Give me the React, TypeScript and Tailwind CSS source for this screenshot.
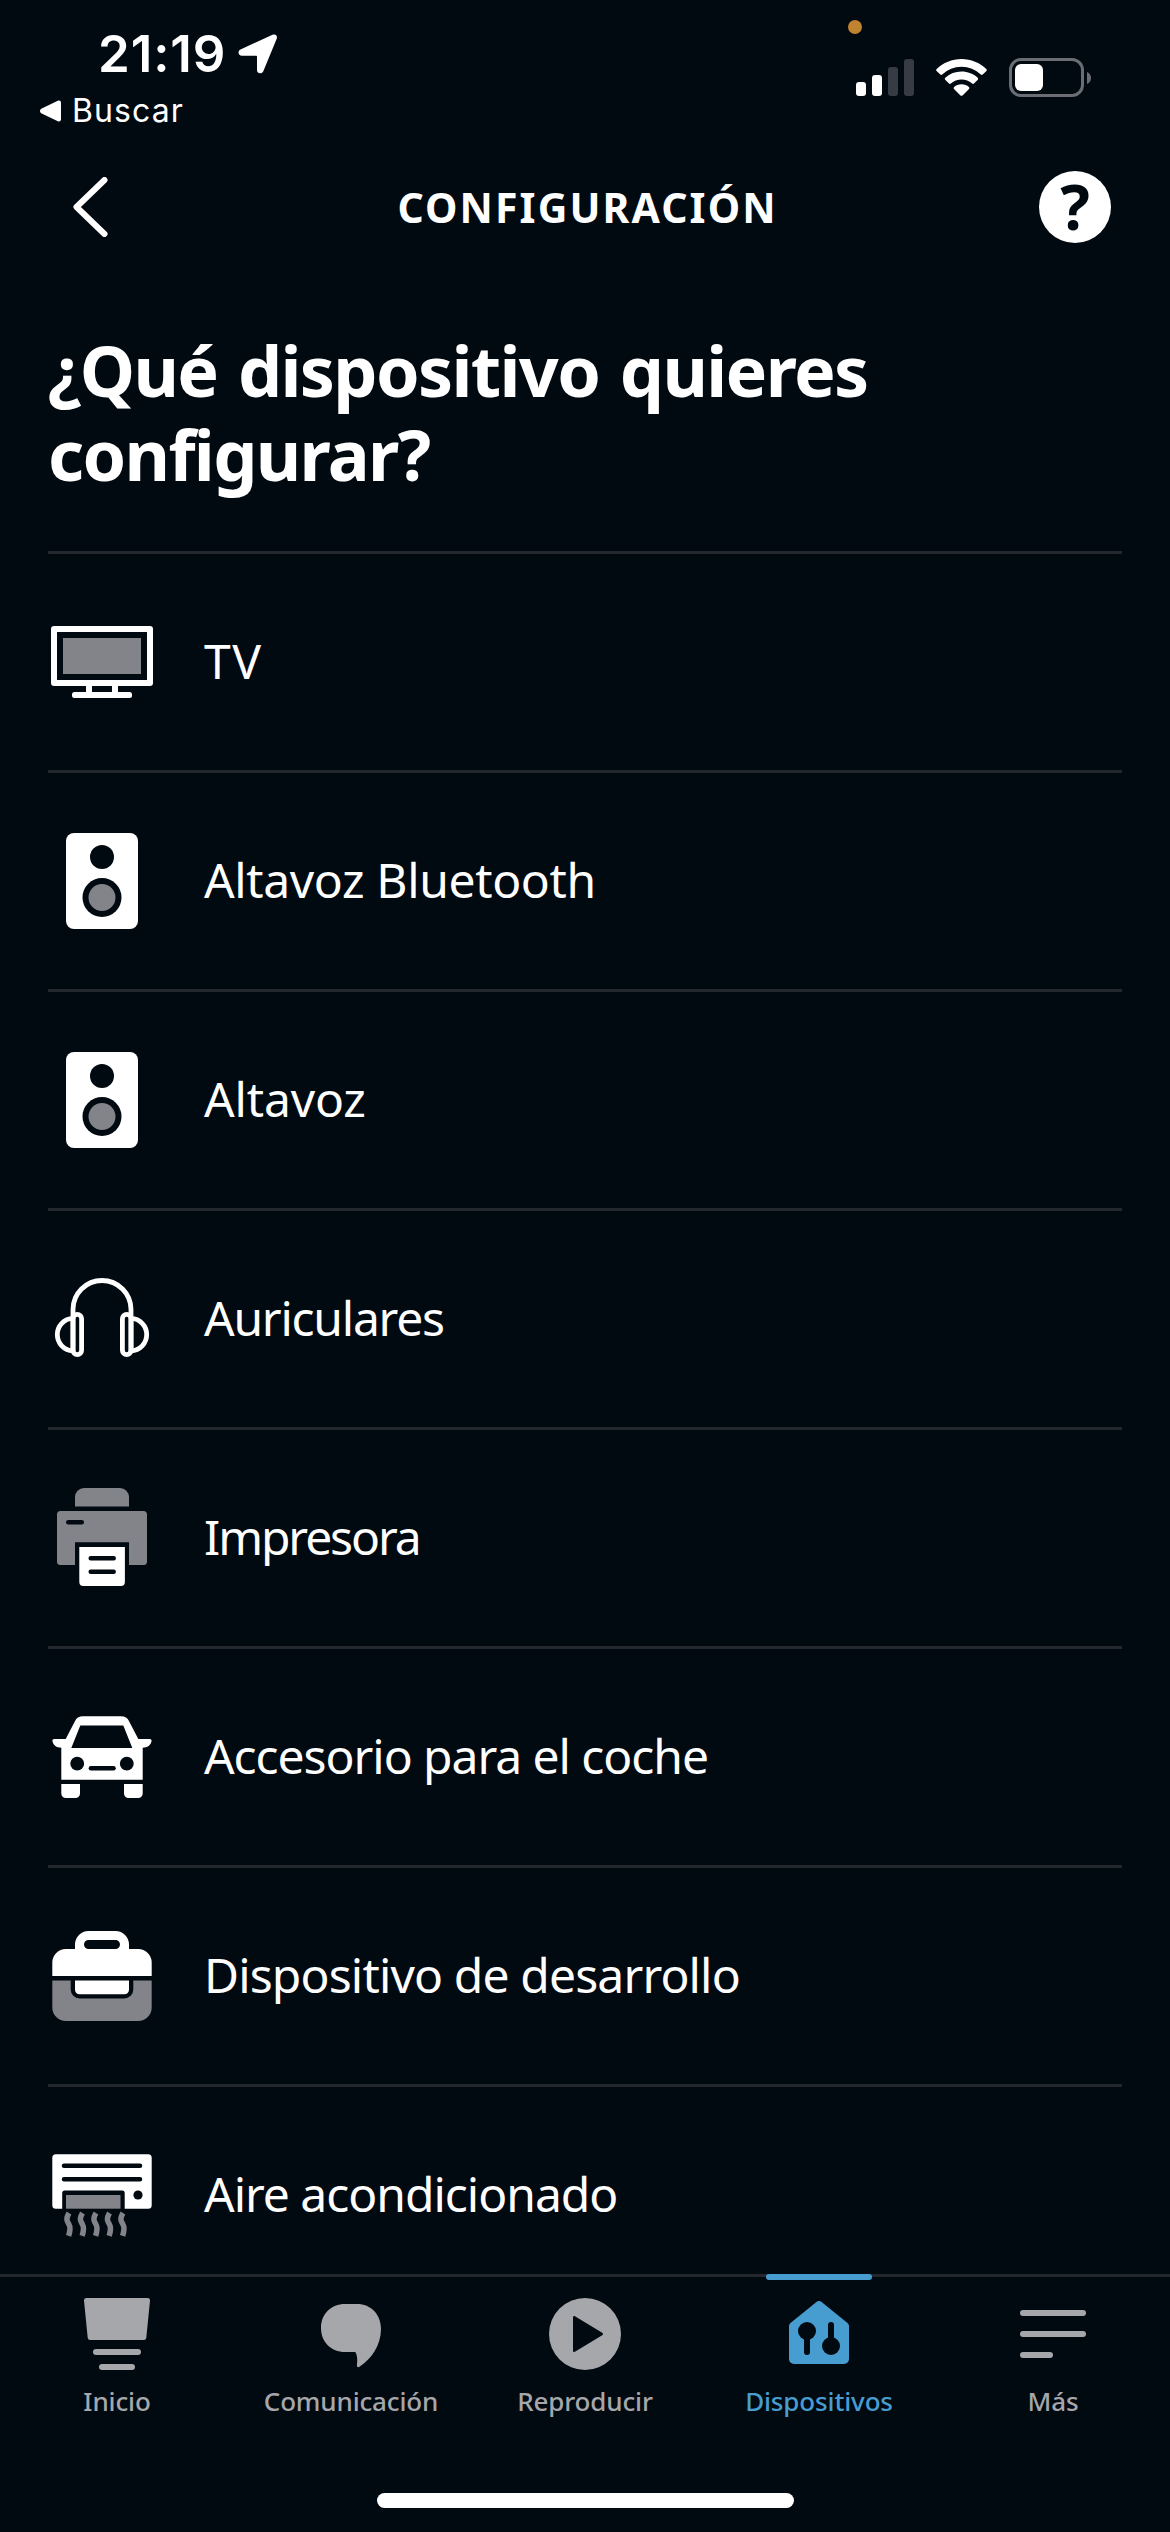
import type { ReactNode } from 'react';

const GREY = '#828489';
const BG = '#010911';

function TvIcon() {
    return (
        <svg className="size-[108px] shrink-0" viewBox="0 0 108 108" fill="none">
            <rect x="6" y="21" width="96" height="54" stroke="#fff" strokeWidth="6" strokeLinejoin="round" />
            <rect x="15" y="30" width="78" height="36" fill={GREY} />
            <path d="M41 77v9M67 77v9" stroke="#fff" strokeWidth="6" />
            <rect x="24" y="84" width="60" height="6" rx="2.5" fill="#fff" />
        </svg>
    );
}

function SpeakerIcon() {
    return (
        <svg className="size-[108px] shrink-0" viewBox="0 0 108 108">
            <rect x="18" y="6" width="72" height="96" rx="8" fill="#fff" />
            <circle cx="54" cy="30" r="12" fill={BG} />
            <circle cx="54" cy="70.5" r="19.5" fill={BG} />
            <circle cx="54" cy="70.5" r="13.5" fill={GREY} />
        </svg>
    );
}

function HeadphonesIcon() {
    return (
        <svg className="size-[108px] shrink-0" viewBox="0 0 108 108" fill="none" stroke="#fff" strokeWidth="4.8">
            <path d="M25 88V44.5a29 29 0 0 1 58 0V88" />
            <rect x="25" y="49.4" width="8.6" height="40.2" rx="4.3" />
            <rect x="74.4" y="49.4" width="8.6" height="40.2" rx="4.3" />
            <path d="M25 53.4C16 53.6 9.3 61 9.3 69.6S16 85.6 25 85.8" />
            <path d="M83 53.4C92 53.6 98.7 61 98.7 69.6S92 85.6 83 85.8" />
        </svg>
    );
}

function PrinterIcon() {
    return (
        <svg className="size-[108px] shrink-0" viewBox="0 0 108 108">
            <path d="M27 22.5V13a9 9 0 0 1 9-9h36a9 9 0 0 1 9 9v9.5z" fill={GREY} />
            <path d="M12.5 27h83a3.5 3.5 0 0 1 3.5 3.5v47a3.5 3.5 0 0 1-3.5 3.5H81V58.3H27V81H12.5A3.5 3.5 0 0 1 9 77.5v-47A3.5 3.5 0 0 1 12.5 27z" fill={GREY} />
            <rect x="18" y="36" width="18" height="4.5" rx="2.25" fill={BG} />
            <path d="M31.3 63h45.6v35a4 4 0 0 1-4 4H35.3a4 4 0 0 1-4-4z" fill="#fff" />
            <path d="M42.7 74.2h23M42.7 87.7h23" stroke={BG} strokeWidth="4.5" strokeLinecap="round" />
        </svg>
    );
}

function CarIcon() {
    return (
        <svg className="size-[108px] shrink-0" viewBox="0 0 108 108" fill="#fff">
            <path
                fillRule="evenodd"
                d="M35 13.3h38c4 0 6.600 1.600 8.200 5.200L90.300 36h11.200c1.500 0 2.300.9 2 2.300-.8 4-4 6.400-8.800 6.400v32H13.300v-32c-4.800 0-8-2.400-8.800-6.400-.3-1.400.5-2.300 2-2.300h11.200l9.100-17.500c1.600-3.600 4.200-5.200 8.200-5.200zM32.300 22.500 23.300 45h61L75.300 22.500z"
            />
            <circle cx="29.2" cy="60.7" r="6.9" fill={BG} />
            <circle cx="78.8" cy="60.7" r="6.9" fill={BG} />
            <path d="M42.9 65.2h22.6" stroke={BG} strokeWidth="4.5" strokeLinecap="round" />
            <path d="M13.3 81H32v9.5a4.500 4.500 0 0 1-4.500 4.500h-9.700a4.500 4.500 0 0 1-4.500-4.500zM76 81h18.700v9.500a4.500 4.500 0 0 1-4.500 4.500h-9.700a4.500 4.500 0 0 1-4.500-4.500z" />
        </svg>
    );
}

function ToolboxIcon() {
    return (
        <svg className="size-[108px] shrink-0" viewBox="0 0 108 108">
            <path
                fillRule="evenodd"
                fill="#fff"
                d="M4.300 54V40.500A13.500 13.500 0 0 1 17.800 27H27v-4.500A13.500 13.500 0 0 1 40.500 9h27A13.500 13.500 0 0 1 81 22.500V27h9.200a13.500 13.500 0 0 1 13.500 13.500V54zM40.500 18a4.500 4.500 0 0 0 0 9h27a4.500 4.500 0 0 0 0-9z"
            />
            <path d="M4.300 58.500h99.400v27A13.500 13.500 0 0 1 90.200 99H17.800A13.500 13.500 0 0 1 4.300 85.500z" fill={GREY} />
            <path d="M22.700 58h62.600v9.500a9 9 0 0 1-9 9H31.700a9 9 0 0 1-9-9z" fill={BG} />
            <path d="M27 58.500h54v9.300a4.500 4.500 0 0 1-4.500 4.500h-45a4.500 4.500 0 0 1-4.500-4.500z" fill="#fff" />
        </svg>
    );
}

function AirConditionerIcon() {
    return (
        <svg className="size-[108px] shrink-0" viewBox="0 0 108 108" fill="none">
            <path d="M7.800 13.300h92.400a3.500 3.500 0 0 1 3.500 3.500v47.400a3.500 3.500 0 0 1-3.500 3.500H76.700V52a2.500 2.500 0 0 0-2.500-2.500h-57.500a2.500 2.500 0 0 0-2.500 2.500v15.700H7.800a3.500 3.500 0 0 1-3.500-3.500V16.800a3.500 3.500 0 0 1 3.500-3.500z" fill="#fff" />
            <path d="M16 24.700h76M16 38.200h76" stroke={BG} strokeWidth="4.5" strokeLinecap="round" />
            <circle cx="90" cy="54" r="4.6" fill={BG} />
            <rect x="18" y="54" width="54.5" height="13.7" fill={GREY} />
            <g stroke={GREY} strokeWidth="5.5">
                <path d="M21 72c-3.600 6-2 8 0 11.500 1.800 3 1.200 6.500-.4 11.300" />
                <path d="M34.500 72c-3.600 6-2 8 0 11.500 1.800 3 1.200 6.500-.4 11.300" />
                <path d="M48 72c-3.600 6-2 8 0 11.500 1.800 3 1.200 6.500-.4 11.300" />
                <path d="M61.500 72c-3.600 6-2 8 0 11.500 1.800 3 1.200 6.500-.4 11.300" />
                <path d="M75 72c-3.600 6-2 8 0 11.500 1.800 3 1.200 6.500-.4 11.300" />
            </g>
        </svg>
    );
}

function HomeIcon() {
    return (
        <svg className="size-[72px]" viewBox="0 0 72 72" fill="currentColor">
            <path d="M5.500 0h61a2.500 2.500 0 0 1 2.500 2.700l-3.700 37a2.500 2.500 0 0 1-2.500 2.300H9.200a2.500 2.500 0 0 1-2.500-2.300L3 2.700A2.500 2.500 0 0 1 5.500 0z" />
            <rect x="12" y="51" width="48" height="6" rx="3" />
            <rect x="18" y="66" width="36" height="6" rx="3" />
        </svg>
    );
}

function ChatIcon() {
    return (
        <svg className="size-[72px]" viewBox="0 0 72 72" fill="currentColor">
            <path d="M30 6h12c14 0 24 10.500 24 25 0 16-9.500 30-21.500 37.800-1.500 1-2.800.2-2.600-1.500.7-5.300.3-9.300-1-12.300-.3-.8-.8-1-1.600-1H30C16 54 6 44 6 30S16 6 30 6z" />
        </svg>
    );
}

function PlayIcon() {
    return (
        <svg className="size-[72px]" viewBox="0 0 72 72" fill="currentColor">
            <path fillRule="evenodd" d="M36 0a36 36 0 1 1 0 72 36 36 0 0 1 0-72zM26.300 18.400c-1.200-.8-2.300-.2-2.300 1.200v32.800c0 1.400 1.100 2 2.300 1.200L53.200 37.300c1-.7 1-1.900 0-2.600z" />
        </svg>
    );
}

function DevicesIcon() {
    return (
        <svg className="size-[72px]" viewBox="0 0 72 72" fill="currentColor">
            <path d="M32.800 4.400c2-1.900 4.400-1.900 6.400 0L64.500 25c1 1 1.500 2 1.500 3.300V61a5 5 0 0 1-5 5H11a5 5 0 0 1-5-5V28.300c0-1.300.5-2.300 1.500-3.300z" />
            <g fill={BG}>
                <circle cx="24" cy="33" r="9" />
                <rect x="21" y="36" width="6" height="21" rx="3" />
                <circle cx="48" cy="48" r="9" />
                <rect x="45" y="24" width="6" height="21" rx="3" />
            </g>
        </svg>
    );
}

function MoreIcon() {
    return (
        <svg className="size-[72px]" viewBox="0 0 72 72" fill="currentColor">
            <rect x="3" y="12" width="66" height="6" rx="3" />
            <rect x="3" y="33" width="66" height="6" rx="3" />
            <rect x="3" y="54" width="33" height="6" rx="3" />
        </svg>
    );
}

const devices: { label: string; icon: ReactNode; tracking: string }[] = [
    { label: 'TV', icon: <TvIcon />, tracking: 'tracking-[1.5px]' },
    { label: 'Altavoz Bluetooth', icon: <SpeakerIcon />, tracking: 'tracking-[-0.37px]' },
    { label: 'Altavoz', icon: <SpeakerIcon />, tracking: 'tracking-[-0.15px]' },
    { label: 'Auriculares', icon: <HeadphonesIcon />, tracking: 'tracking-[-1.25px]' },
    { label: 'Impresora', icon: <PrinterIcon />, tracking: 'tracking-[-2.1px]' },
    { label: 'Accesorio para el coche', icon: <CarIcon />, tracking: 'tracking-[-1.05px]' },
    { label: 'Dispositivo de desarrollo', icon: <ToolboxIcon />, tracking: 'tracking-[-0.85px]' },
    { label: 'Aire acondicionado', icon: <AirConditionerIcon />, tracking: 'tracking-[-1.02px]' },
];

const tabs: { label: string; icon: ReactNode; active?: boolean }[] = [
    { label: 'Inicio', icon: <HomeIcon /> },
    { label: 'Comunicación', icon: <ChatIcon /> },
    { label: 'Reproducir', icon: <PlayIcon /> },
    { label: 'Dispositivos', icon: <DevicesIcon />, active: true },
    { label: 'Más', icon: <MoreIcon /> },
];

function StatusBar() {
    return (
        <div className="flex h-[141px] justify-between font-['Inter',sans-serif]">
            <div className="flex flex-col pt-[24px]">
                <div className="flex h-[60px] items-center pl-[98px]">
                    <span className="text-[51px] leading-[60px] font-semibold tracking-[0.9px]">21:19</span>
                    <svg className="ml-[12px] h-[40px] w-[40px]" viewBox="0 0 40 40" fill="#fff">
                        <path d="M34.500.8c3-1.300 5.300.9 4.200 4L25.300 37.200c-1.400 3.200-6.300 2.700-6.300-1.200V22.800c0-.8-.3-1.100-1.100-1.100H4C.2 21.700-.8 17 2.500 15.400z" />
                    </svg>
                </div>
                <div className="flex h-[54px] items-center pl-[39px]">
                    <svg className="h-[24px] w-[22px]" viewBox="0 0 22 24" fill="#fff">
                        <path d="M18.800 1.800c1.700-.9 3.200.1 3.200 1.900v16.600c0 1.800-1.500 2.800-3.200 1.900L2.200 14.200c-1.600-1-1.600-3.400 0-4.400z" />
                    </svg>
                    <span className="ml-[11px] text-[32px] leading-[54px] tracking-[1.1px]">Buscar</span>
                </div>
            </div>
            <div className="flex flex-col pt-[20px] pr-[79px]">
                <div className="-ml-[8px] size-[14px] rounded-full bg-[#c0832f]" />
                <div className="mt-[24px] flex h-[39px] items-center">
                    <div className="flex h-[37px] items-end gap-[6px]">
                        <div className="h-[14px] w-[10px] rounded-[3px] bg-white" />
                        <div className="h-[21px] w-[10px] rounded-[3px] bg-white" />
                        <div className="h-[29px] w-[10px] rounded-[3px] bg-[#363b44]" />
                        <div className="h-[37px] w-[10px] rounded-[3px] bg-[#363b44]" />
                    </div>
                    <svg className="ml-[22px] h-[37px] w-[51px]" viewBox="0 0 51 37" fill="#fff">
                        <path d="M25.500 0C35 0 43.800 3.700 50.300 10c.7.600.7 1.400.1 2l-3.700 3.500c-.6.500-1.300.5-1.900 0A28 28 0 0 0 25.500 7.700 28 28 0 0 0 6.200 15.500c-.6.500-1.300.5-1.900 0L.6 12c-.6-.6-.6-1.400.1-2C7.200 3.700 16 0 25.500 0z" />
                        <path d="M25.500 12.600c6.200 0 11.900 2.300 16.200 6.200.6.600.6 1.400.1 2L38 24.500c-.6.600-1.300.5-1.900 0a16 16 0 0 0-10.600-4 16 16 0 0 0-10.600 4c-.6.500-1.300.6-1.900 0l-3.800-3.700c-.5-.6-.5-1.400.1-2a24 24 0 0 1 16.200-6.200z" />
                        <path d="M25.500 25.300c2.900 0 5.400 1 7.400 2.700.6.500.6 1.300.1 1.900l-6.500 6.500c-.6.600-1.400.6-2 0L18 29.900c-.5-.6-.5-1.400.1-1.900 2-1.700 4.500-2.700 7.400-2.700z" />
                    </svg>
                    <div className="ml-[22px] flex h-[39px] w-[75px] items-center rounded-[12px] border-[3px] border-[#6a6e74] pl-[3px]">
                        <div className="h-[27px] w-[28px] rounded-[6px] bg-white" />
                    </div>
                    <svg className="ml-[3px] h-[12px] w-[4px]" viewBox="0 0 4 12" fill="#6a6e74">
                        <path d="M0 0c2.500 1 4 3.300 4 6s-1.500 5-4 6z" />
                    </svg>
                </div>
            </div>
        </div>
    );
}

export default function App() {
    return (
        <div className="flex h-[2532px] w-[1170px] flex-col overflow-hidden bg-[#010911] font-['Noto_Sans',sans-serif] text-white">
            <StatusBar />

            {/* Header */}
            <header className="flex h-[132px] items-center justify-between pr-[59px] pl-[72px]">
                <svg className="h-[60px] w-[36px]" viewBox="0 0 36 60" fill="none">
                    <path d="M32.500 3 4.500 30l28 27" stroke="#fff" strokeWidth="6" strokeLinecap="round" strokeLinejoin="round" />
                </svg>
                <h1 className="pl-[28px] text-[41px] leading-[48px] font-bold tracking-[2.1px]">CONFIGURACIÓN</h1>
                <div className="flex size-[72px] items-center justify-center rounded-full bg-white">
                    <span className="mb-[3px] text-[62px] leading-[72px] font-bold text-[#010911]">?</span>
                </div>
            </header>

            {/* Device list */}
            <main className="flex min-h-0 flex-1 flex-col overflow-hidden px-12 pt-[55px]">
                <h2 className="h-[223px] w-[900px] shrink-0 text-[70px] leading-[84px] font-bold tracking-[-1.65px] [word-spacing:4px]">
                    ¿Qué dispositivo quieres configurar?
                </h2>
                <ul>
                    {devices.map((device) => (
                        <li key={device.label} className="flex h-[219px] items-center gap-12 border-t-[3px] border-[#23282e]">
                            {device.icon}
                            <span className={`pb-[3px] text-[48px] leading-[64px] ${device.tracking}`}>{device.label}</span>
                        </li>
                    ))}
                </ul>
            </main>

            {/* Tab bar */}
            <nav className="flex h-[219px] shrink-0 border-t-[3px] border-[#23282e]">
                {tabs.map((tab) => (
                    <div
                        key={tab.label}
                        className={`relative flex flex-1 flex-col items-center pt-[21px] ${tab.active ? 'text-[#489dd0]' : 'text-[#a5a7ab]'}`}
                    >
                        {tab.active && <div className="absolute -top-[3px] h-[6px] w-[106px] rounded-full bg-[#489dd0]" />}
                        {tab.icon}
                        <span className="mt-[13px] text-[26px] leading-[36px] font-medium tracking-[-0.15px]">{tab.label}</span>
                    </div>
                ))}
            </nav>

            {/* Home indicator */}
            <div className="flex h-[39px] shrink-0 justify-center">
                <div className="h-[15px] w-[417px] rounded-full bg-white" />
            </div>
        </div>
    );
}
